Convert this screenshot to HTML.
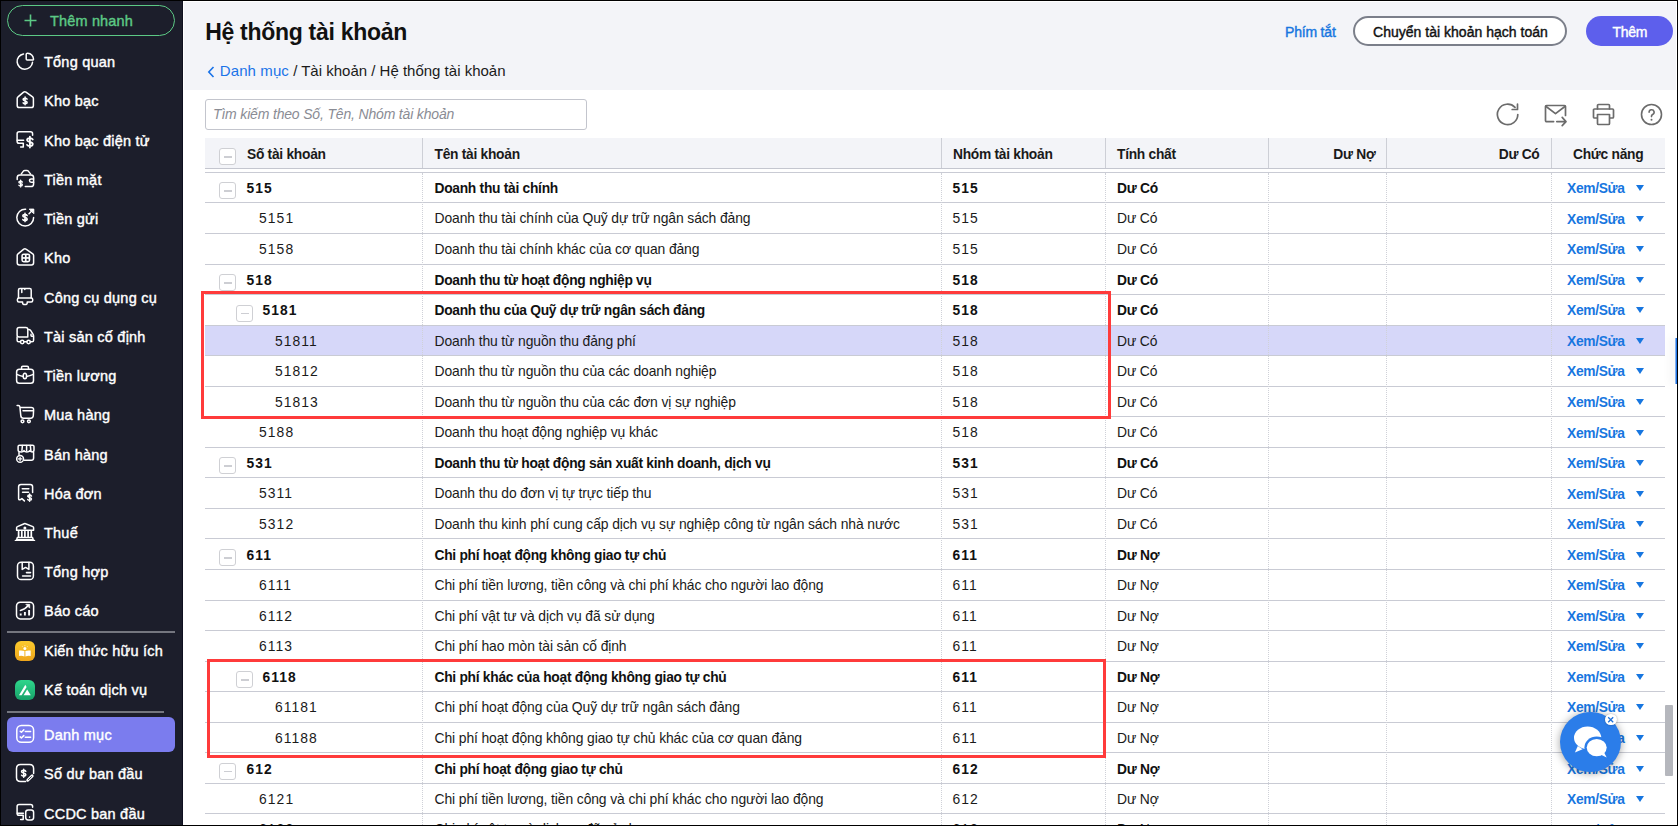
<!DOCTYPE html>
<html><head><meta charset="utf-8"><title>Hệ thống tài khoản</title>
<style>
*{box-sizing:border-box;margin:0;padding:0}
html,body{width:1678px;height:826px;overflow:hidden;background:#fff;font-family:"Liberation Sans", sans-serif;position:relative}
.a{position:absolute}
.nw{white-space:nowrap}
.si{position:absolute;left:44px;height:20px;line-height:20px;font-size:14.5px;letter-spacing:0.22px;-webkit-text-stroke:0.4px #fff;color:#fff;white-space:nowrap}
.ic{position:absolute;left:16px;width:18px;height:18px}
.ic svg{display:block;width:18px;height:18px;overflow:visible}
.row{position:absolute;left:205px;width:1460px;border-bottom:1px solid #c9cbd4}
.c{position:absolute;top:0;white-space:nowrap;color:#1a1a1a}
.b{font-weight:bold}
.cb{position:absolute;width:17px;height:17px;border:1px solid #cfd0d4;border-radius:3px;background:#fff}
.cb:after{content:"";position:absolute;left:3.5px;top:7px;width:8.5px;height:1.6px;background:#cdced3}
.xs{position:absolute;left:1567px;color:#1776e0;font-weight:bold;font-size:13.8px;letter-spacing:-0.32px;white-space:nowrap}
.tri{position:absolute;left:1636px;width:0;height:0;border-left:4px solid transparent;border-right:4px solid transparent;border-top:6px solid #1776e0}
.vd{position:absolute;width:0;border-left:1px dotted #cfd1d8}
</style></head>
<body>
<div class="a" style="left:0;top:0;width:183px;height:826px;background:#1c1e2b"></div>
<div class="a" style="left:182px;top:0;width:1px;height:826px;background:#0f1020"></div>
<div class="a" style="left:184px;top:2px;width:1492px;height:88px;background:#f3f4f8"></div>
<div class="a" style="left:7px;top:5px;width:168px;height:31px;border:1.5px solid #5cc985;border-radius:16px"></div>
<svg class="a" style="left:24px;top:14px" width="13" height="13" viewBox="0 0 13 13"><path d="M6.5 0.5V12.5M0.5 6.5H12.5" stroke="#5cc985" stroke-width="1.6" fill="none"/></svg>
<div class="a nw" style="left:50px;top:11px;height:20px;line-height:20px;font-size:14.5px;letter-spacing:0.16px;-webkit-text-stroke:0.4px #5cc985;color:#5cc985">Thêm nhanh</div>
<div class="a" style="left:7px;top:631px;width:168px;height:2px;background:#74767f"></div>
<div class="a" style="left:7px;top:711px;width:157px;height:2px;background:#74767f"></div>
<div class="a" style="left:7px;top:717px;width:168px;height:35px;background:#7b7cee;border-radius:6px"></div>
<div class="si" style="top:52.25px">Tổng quan</div>
<div class="a" style="left:12px;top:48px;width:28px;height:28px"><svg width="28" height="28" viewBox="0 0 28 28" fill="none" stroke="#fff" stroke-width="1.5" stroke-linecap="round" stroke-linejoin="round"><path d="M11.5 5.9A7.7 7.7 0 1 0 20.5 14.3"/><path d="M14.2 6.4V11Q14.2 12 15.2 12H20.6Q21.6 12 21.5 11A6.6 6.6 0 0 0 15.6 5.2Q14.2 5.1 14.2 6.4Z"/></svg></div>
<div class="si" style="top:91.48px">Kho bạc</div>
<div class="a" style="left:12px;top:87px;width:28px;height:28px"><svg width="28" height="28" viewBox="0 0 28 28" fill="none" stroke="#fff" stroke-width="1.5" stroke-linecap="round" stroke-linejoin="round"><path d="M5.2 11.4Q5.2 10.5 6 9.9L11.6 5.1Q12.8 4.2 14 5.1L20.6 9.9Q21.4 10.5 21.4 11.4V18.5Q21.4 20.6 19.3 20.6H7.3Q5.2 20.6 5.2 18.5Z"/><path d="M15.08 12.15C14.68 11.47 13.69 11.16 13.10 11.16C11.91 11.16 11.12 11.62 11.12 12.46C11.12 13.98 15.08 13.44 15.08 15.19C15.08 16.10 14.29 16.64 13.10 16.64C12.31 16.64 11.42 16.33 11.12 15.80M13.10 10.10V17.70" stroke-width="1.5"/></svg></div>
<div class="si" style="top:130.71px">Kho bạc điện tử</div>
<div class="a" style="left:12px;top:126px;width:28px;height:28px"><svg width="28" height="28" viewBox="0 0 28 28" fill="none" stroke="#fff" stroke-width="1.5" stroke-linecap="round" stroke-linejoin="round"><path d="M20.6 9.3V7.9Q20.6 5.8 18.5 5.8H7.2Q5.1 5.8 5.1 7.9V15.2Q5.1 17.3 7.2 17.3H11.3V21H8.6"/><path d="M5.3 14.2H11.6"/><path d="M20.76 13.57C20.19 12.58 18.76 12.14 17.90 12.14C16.18 12.14 15.04 12.80 15.04 14.01C15.04 16.21 20.76 15.44 20.76 17.97C20.76 19.29 19.62 20.06 17.90 20.06C16.76 20.06 15.47 19.62 15.04 18.85M17.90 10.60V21.60" stroke-width="1.8"/></svg></div>
<div class="si" style="top:169.94px">Tiền mặt</div>
<div class="a" style="left:12px;top:165px;width:28px;height:28px"><svg width="28" height="28" viewBox="0 0 28 28" fill="none" stroke="#fff" stroke-width="1.5" stroke-linecap="round" stroke-linejoin="round"><path d="M9.3 8.9L11.6 5.9Q12.1 5.4 12.8 5.4H15Q15.6 5.4 16.1 5.9L18.5 8.9"/><path d="M5.2 14.5V12.6Q5.2 9.9 7.9 9.9H19Q21.6 9.9 21.6 12.6V19Q21.6 21.6 19 21.6H13.3"/><path d="M21.6 13.9H19.2A1.7 1.7 0 1 0 19.2 17.3H21.6"/><path d="M10.32 17.08C9.97 16.49 9.11 16.22 8.60 16.22C7.57 16.22 6.88 16.62 6.88 17.35C6.88 18.67 10.32 18.20 10.32 19.72C10.32 20.51 9.63 20.98 8.60 20.98C7.91 20.98 7.14 20.71 6.88 20.25M8.60 15.30V21.90" stroke-width="1.4"/></svg></div>
<div class="si" style="top:209.17px">Tiền gửi</div>
<div class="a" style="left:12px;top:204px;width:28px;height:28px"><svg width="28" height="28" viewBox="0 0 28 28" fill="none" stroke="#fff" stroke-width="1.5" stroke-linecap="round" stroke-linejoin="round"><path d="M13.6 5.2A8.4 8.4 0 1 0 21.6 13.4"/><path d="M17 9.8L21 5.8"/><path d="M17.6 5.1H21.8V9.3Z" fill="#fff" stroke-width="1"/><path d="M15.13 11.61C14.71 10.88 13.64 10.55 13.00 10.55C11.72 10.55 10.87 11.04 10.87 11.94C10.87 13.58 15.13 13.01 15.13 14.89C15.13 15.88 14.28 16.45 13.00 16.45C12.15 16.45 11.19 16.12 10.87 15.55M13.00 9.40V17.60" stroke-width="1.6"/></svg></div>
<div class="si" style="top:248.40px">Kho</div>
<div class="a" style="left:12px;top:244px;width:28px;height:28px"><svg width="28" height="28" viewBox="0 0 28 28" fill="none" stroke="#fff" stroke-width="1.5" stroke-linecap="round" stroke-linejoin="round"><path d="M5.2 11.4Q5.2 10.5 6 9.9L11.8 5.1Q12.9 4.2 14 5.1L20.8 9.9Q21.6 10.5 21.6 11.4V18.8Q21.6 20.9 19.5 20.9H7.3Q5.2 20.9 5.2 18.8Z"/><rect x="9.3" y="9.6" width="9" height="8.8" rx="2.4" fill="#fff" stroke="none"/><rect x="10.9" y="11.1" width="2" height="2" fill="#1c1e2b" stroke="none"/><rect x="14.6" y="11.1" width="2" height="2" fill="#1c1e2b" stroke="none"/><rect x="10.9" y="14.8" width="2" height="2" fill="#1c1e2b" stroke="none"/><rect x="14.6" y="14.8" width="2" height="2" fill="#1c1e2b" stroke="none"/></svg></div>
<div class="si" style="top:287.63px">Công cụ dụng cụ</div>
<div class="a" style="left:12px;top:283px;width:28px;height:28px"><svg width="28" height="28" viewBox="0 0 28 28" fill="none" stroke="#fff" stroke-width="1.5" stroke-linecap="round" stroke-linejoin="round"><path d="M6.5 14.8V7Q6.5 5.6 7.9 5.6H17.8Q19.2 5.6 19.2 7V14.8"/><path d="M9.8 6V9.6M12.8 5.8V6.6"/><path d="M5.4 16.5Q5.4 15 6.9 15H19.2Q20.7 15 20.7 16.5V17.4Q20.7 18.9 19.2 18.9H15.2V20Q15.2 21.6 12.9 21.6Q10.6 21.6 10.6 20V18.9H6.9Q5.4 18.9 5.4 17.4Z"/></svg></div>
<div class="si" style="top:326.86px">Tài sản cố định</div>
<div class="a" style="left:12px;top:322px;width:28px;height:28px"><svg width="28" height="28" viewBox="0 0 28 28" fill="none" stroke="#fff" stroke-width="1.5" stroke-linecap="round" stroke-linejoin="round"><path d="M15.8 14.6V7.4Q15.8 5.4 13.8 5.4H7.1Q5.1 5.4 5.1 7.4V12.9Q5.1 14.9 7.1 14.9H15.8"/><path d="M16.6 7.4Q17.9 7.4 18.6 8.4L21.1 12.4Q21.6 13.2 21.6 14.2V18.2Q21.6 19.8 20 19.8H18.4"/><path d="M5.1 14.9V18.2Q5.1 19.8 6.7 19.8H8.4M12 19.8H14.8"/><circle cx="10.2" cy="20" r="1.7"/><circle cx="16.6" cy="20" r="1.7"/><path d="M19 12.2V13.6Q19 14.2 19.6 14.2H20.6"/></svg></div>
<div class="si" style="top:366.09px">Tiền lương</div>
<div class="a" style="left:12px;top:361px;width:28px;height:28px"><svg width="28" height="28" viewBox="0 0 28 28" fill="none" stroke="#fff" stroke-width="1.5" stroke-linecap="round" stroke-linejoin="round"><rect x="4.6" y="8.2" width="16.9" height="14" rx="2.8"/><path d="M9.5 8.2V6.7Q9.5 5.3 10.9 5.3H15.1Q16.5 5.3 16.5 6.7V8.2"/><path d="M4.8 13.4Q8 15 11.2 15.4M14.6 15.4Q18 15 21.3 13.4"/><ellipse cx="12.9" cy="15" rx="1.7" ry="2.8"/></svg></div>
<div class="si" style="top:405.32px">Mua hàng</div>
<div class="a" style="left:12px;top:401px;width:28px;height:28px"><svg width="28" height="28" viewBox="0 0 28 28" fill="none" stroke="#fff" stroke-width="1.5" stroke-linecap="round" stroke-linejoin="round"><path d="M5.1 4.6H6.4Q7.7 4.6 7.9 5.9L8.8 14.6Q9 17.2 11.5 17.2H18.7Q21.1 17.2 21.3 14.8L21.6 9Q21.7 6.4 19.2 6.4H8.1"/><path d="M11 9.8H21.1"/><circle cx="10.5" cy="20.3" r="1.4"/><circle cx="16.9" cy="20.3" r="1.4"/></svg></div>
<div class="si" style="top:444.55px">Bán hàng</div>
<div class="a" style="left:12px;top:440px;width:28px;height:28px"><svg width="28" height="28" viewBox="0 0 28 28" fill="none" stroke="#fff" stroke-width="1.5" stroke-linecap="round" stroke-linejoin="round"><path d="M6.1 10.2V6.6Q6.1 5.2 7.5 5.2H20.6Q22 5.2 22 6.6V10Q22 11.9 20.1 11.9Q18.2 11.9 17.7 10.6Q17 11.9 14.9 11.9Q12.7 11.9 12 10.6Q11.3 11.9 9.3 11.9Q6.1 11.9 6.1 10.2Z"/><path d="M10.4 5.4L9.9 10.8M14.6 5.4V10.8M18.3 5.4L18.9 10.8"/><path d="M7 12.6V14.6M21.6 12.4V18Q21.6 20.3 19.3 20.3H12.2"/><circle cx="8.1" cy="18.9" r="3.4" fill="#1c1e2b"/><path d="M8.1 17.2V20.6M6.4 18.9H9.8" stroke-width="1.3"/></svg></div>
<div class="si" style="top:483.78px">Hóa đơn</div>
<div class="a" style="left:12px;top:479px;width:28px;height:28px"><svg width="28" height="28" viewBox="0 0 28 28" fill="none" stroke="#fff" stroke-width="1.5" stroke-linecap="round" stroke-linejoin="round"><path d="M20.6 13.4V7.8Q20.6 5.5 18.3 5.5H9Q6.6 5.5 6.6 7.8V19.6Q6.6 21 8 20.8L9.9 19.6L12.4 21.9"/><path d="M10.3 9.8H16.8M10.6 13.2H16.5" stroke-width="1.6"/><path d="M19.47 17.04C19.10 16.40 18.16 16.11 17.60 16.11C16.48 16.11 15.73 16.54 15.73 17.33C15.73 18.77 19.47 18.27 19.47 19.92C19.47 20.79 18.72 21.29 17.60 21.29C16.85 21.29 16.01 21.00 15.73 20.50M17.60 15.10V22.30" stroke-width="1.5"/></svg></div>
<div class="si" style="top:523.01px">Thuế</div>
<div class="a" style="left:12px;top:519px;width:28px;height:28px"><svg width="28" height="28" viewBox="0 0 28 28" fill="none" stroke="#fff" stroke-width="1.5" stroke-linecap="round" stroke-linejoin="round"><path d="M4.6 11.3V8.7Q4.6 7.9 5.4 7.6L12.2 4.7Q12.9 4.4 13.6 4.7L20.9 7.6Q21.6 7.9 21.6 8.7V11.3Z"/><circle cx="12.9" cy="8.9" r="1.5" fill="#fff" stroke="none"/><path d="M6.6 12.6V17.8M9.8 12.6V17.8M12.9 12.6V17.8M16.1 12.6V17.8M19.3 12.6V17.8" stroke-width="1.7"/><path d="M5.3 18.6H20.6L21.2 20.7H4.7Z"/><path d="M3.3 21.4H22.6" stroke-width="1.3"/></svg></div>
<div class="si" style="top:562.24px">Tổng hợp</div>
<div class="a" style="left:12px;top:558px;width:28px;height:28px"><svg width="28" height="28" viewBox="0 0 28 28" fill="none" stroke="#fff" stroke-width="1.5" stroke-linecap="round" stroke-linejoin="round"><rect x="5.5" y="4.3" width="15.9" height="17.3" rx="3.6"/><path d="M10.2 4.4V11.4L13.6 9.4L16.9 11.4V4.4"/><path d="M14.5 14.6H18.5M10.6 18H18.5" stroke-width="1.6"/></svg></div>
<div class="si" style="top:601.47px">Báo cáo</div>
<div class="a" style="left:12px;top:597px;width:28px;height:28px"><svg width="28" height="28" viewBox="0 0 28 28" fill="none" stroke="#fff" stroke-width="1.5" stroke-linecap="round" stroke-linejoin="round"><rect x="4.5" y="5.2" width="17.1" height="16.7" rx="3.8"/><path d="M8.7 16.4V18.6M12.9 15V18.6M17.1 13V18.6" stroke-width="1.9" stroke-linecap="butt"/><path d="M8.4 13.5Q12.6 12.8 16.3 8.6"/><path d="M14.2 7.3H17.7V10.8Z" fill="#fff" stroke-width="0.8"/></svg></div>
<div class="si" style="top:640.70px">Kiến thức hữu ích</div>
<div class="a" style="left:15px;top:641px;width:20px;height:20px;border-radius:6px;background:linear-gradient(#fccb2e,#eea51b)"><svg width="20" height="20" viewBox="0 0 20 20"><path d="M4.1 9.6Q6.8 9 9.4 10.1V15.4Q6.8 14.4 4.1 15Z" fill="#fff"/><path d="M15.7 9.6Q13 9 10.4 10.1V15.4Q13 14.4 15.7 15Z" fill="#fff"/><circle cx="9.9" cy="7.6" r="1.5" fill="#fff"/><path d="M9.9 4.3V5.2M7.3 5.4L7.9 6M12.5 5.4L11.9 6" stroke="#fff" stroke-width="0.7"/></svg></div>
<div class="si" style="top:679.93px">Kế toán dịch vụ</div>
<div class="a" style="left:15px;top:680px;width:20px;height:20px;border-radius:6px;background:linear-gradient(#2fd68c,#17a169)"><svg width="20" height="20" viewBox="0 0 20 20"><path d="M4 15.2L10.3 4.7L11.6 6.9L6.6 15.2Z" fill="#fff"/><path d="M8.6 15.2L12.2 9.4L15.8 15.2Z" fill="#fff"/></svg></div>
<div class="si" style="top:725.16px">Danh mục</div>
<div class="a" style="left:12px;top:720px;width:28px;height:28px"><svg width="28" height="28" viewBox="0 0 28 28" fill="none" stroke="#fff" stroke-width="1.5" stroke-linecap="round" stroke-linejoin="round"><rect x="4.8" y="5.5" width="16.8" height="16.8" rx="4.6"/><path d="M8.2 11.2L9.4 12.3L11.8 9.9M8.2 16.9L9.4 18L11.8 15.6M13.3 11.5H18.6M13.3 17.3H18.6"/></svg></div>
<div class="si" style="top:764.39px">Số dư ban đầu</div>
<div class="a" style="left:12px;top:760px;width:28px;height:28px"><svg width="28" height="28" viewBox="0 0 28 28" fill="none" stroke="#fff" stroke-width="1.5" stroke-linecap="round" stroke-linejoin="round"><path d="M21.6 13.4V8.6Q21.6 4.5 17.5 4.5H8.5Q4.5 4.5 4.5 8.6V17.6Q4.5 21.6 8.5 21.6H13.6"/><path d="M15.7 20.3L20.2 15.9" stroke-width="2.9"/><path d="M16.4 19.6L19.5 16.6" stroke="#1c1e2b" stroke-width="0.9"/><path d="M13.81 11.34C13.38 10.61 12.33 10.28 11.70 10.28C10.44 10.28 9.59 10.77 9.59 11.66C9.59 13.28 13.81 12.71 13.81 14.58C13.81 15.55 12.96 16.12 11.70 16.12C10.86 16.12 9.91 15.79 9.59 15.22M11.70 9.15V17.25" stroke-width="1.5"/></svg></div>
<div class="si" style="top:803.62px">CCDC ban đầu</div>
<div class="a" style="left:12px;top:798px;width:28px;height:28px"><svg width="28" height="28" viewBox="0 0 28 28" fill="none" stroke="#fff" stroke-width="1.5" stroke-linecap="round" stroke-linejoin="round"><path d="M20.6 9.3V8.4Q20.6 6.4 18.6 6.4H7.1Q5.1 6.4 5.1 8.4V15.2Q5.1 17.3 7.1 17.3H11.2V21.6H8.6"/><path d="M5.3 15.3H11.4"/><rect x="13.7" y="11.9" width="7.9" height="10" rx="2.4"/><path d="M17.6 19V19.1" stroke-width="1.6"/></svg></div>
<div class="a nw" style="left:205.2px;top:17.8px;height:28px;line-height:28px;font-size:23px;letter-spacing:-0.29px;font-weight:bold;color:#111">Hệ thống tài khoản</div>
<svg class="a" style="left:207px;top:66px" width="8" height="12" viewBox="0 0 8 12"><path d="M6.5 1L1.8 6L6.5 11" stroke="#1a73e8" stroke-width="1.6" fill="none"/></svg>
<div class="a nw" style="left:219.8px;top:61.3px;height:20px;line-height:20px;font-size:15px;color:#1a1a1a"><span style="color:#1a73e8;letter-spacing:0.1px">Danh mục</span> / Tài khoản / Hệ thống tài khoản</div>
<div class="a nw" style="left:1285px;top:22px;height:20px;line-height:20px;font-size:14px;letter-spacing:-0.19px;-webkit-text-stroke:0.4px #1776e0;color:#1776e0">Phím tắt</div>
<div class="a" style="left:1353px;top:16px;width:214px;height:30px;border:2px solid #7b7f8a;border-radius:15px;background:#fff"></div>
<div class="a nw" style="left:1373px;top:22px;height:20px;line-height:20px;font-size:14px;letter-spacing:0.02px;-webkit-text-stroke:0.4px #111;color:#111">Chuyển tài khoản hạch toán</div>
<div class="a" style="left:1586px;top:16px;width:87px;height:30px;border-radius:15px;background:#5d5fec"></div>
<div class="a nw" style="left:1612.5px;top:22px;height:20px;line-height:20px;font-size:14px;letter-spacing:-0.3px;-webkit-text-stroke:0.4px #fff;color:#fff">Thêm</div>
<div class="a" style="left:205px;top:99px;width:382px;height:31px;border:1px solid #c3c5cd;border-radius:3px;background:#fff"></div>
<div class="a nw" style="left:213px;top:104px;height:20px;line-height:20px;font-size:14px;letter-spacing:-0.17px;font-style:italic;color:#8a8c94">Tìm kiếm theo Số, Tên, Nhóm tài khoản</div>
<svg class="a" style="left:1496px;top:103px" width="23" height="23" viewBox="0 0 23 23" fill="none" stroke="#6b6b6b" stroke-width="1.7" stroke-linecap="round" stroke-linejoin="round"><path d="M21.8 11.5A10.2 10.2 0 1 1 19 4.4"/><path d="M21.5 1.2V6.5H16.2"/></svg>
<svg class="a" style="left:1544px;top:104px" width="24" height="23" viewBox="0 0 24 23" fill="none" stroke="#6b6b6b" stroke-width="1.7" stroke-linecap="round" stroke-linejoin="round"><path d="M9.6 17.6H2.6A1.1 1.1 0 0 1 1.5 16.5V2.6A1.1 1.1 0 0 1 2.6 1.5H20.4A1.1 1.1 0 0 1 21.5 2.6V11.5"/><path d="M1.8 2.2L11.5 9.6L21.2 2.2"/><path d="M12.8 17.6H21.8M18.2 13.4L22 17.6L18.2 21.6"/></svg>
<svg class="a" style="left:1592px;top:103px" width="24" height="23" viewBox="0 0 24 23" fill="none" stroke="#6b6b6b" stroke-width="1.7" stroke-linecap="round" stroke-linejoin="round"><path d="M5.5 6V2.5A1 1 0 0 1 6.5 1.5H16.5A1 1 0 0 1 17.5 2.5V6"/><path d="M5 15H2.5A1 1 0 0 1 1.5 14V7A1 1 0 0 1 2.5 6H20.5A1 1 0 0 1 21.5 7V14A1 1 0 0 1 20.5 15H18"/><path d="M5.5 11.5H17.5V20.5A1 1 0 0 1 16.5 21.5H6.5A1 1 0 0 1 5.5 20.5Z"/></svg>
<svg class="a" style="left:1640px;top:103px" width="23" height="23" viewBox="0 0 23 23" fill="none" stroke="#6b6b6b" stroke-width="1.6" stroke-linecap="round" stroke-linejoin="round"><circle cx="11.5" cy="11.5" r="10"/><path d="M9.1 9.2A2.5 2.5 0 1 1 12.6 11.5C11.9 11.9 11.5 12.4 11.5 13.1V13.6"/><circle cx="11.5" cy="16.7" r="1" fill="#6b6b6b" stroke="none"/></svg>
<div class="a" style="left:205px;top:138px;width:1460px;height:31px;background:#f3f4f8;border-bottom:1px solid #c4c6cf"></div>
<div class="a" style="left:422px;top:138px;width:1px;height:30px;background:#cdcfd6"></div>
<div class="a" style="left:941px;top:138px;width:1px;height:30px;background:#cdcfd6"></div>
<div class="a" style="left:1105px;top:138px;width:1px;height:30px;background:#cdcfd6"></div>
<div class="a" style="left:1268px;top:138px;width:1px;height:30px;background:#cdcfd6"></div>
<div class="a" style="left:1386px;top:138px;width:1px;height:30px;background:#cdcfd6"></div>
<div class="a" style="left:1551px;top:138px;width:1px;height:30px;background:#cdcfd6"></div>
<div class="cb" style="left:219px;top:148px"></div>
<div class="a nw" style="left:247px;top:145px;font-size:13.8px;letter-spacing:-0.28px;font-weight:bold;color:#1a1a1a;height:20px;line-height:20px">Số tài khoản</div>
<div class="a nw" style="left:434.5px;top:145px;font-size:13.8px;letter-spacing:-0.28px;font-weight:bold;color:#1a1a1a;height:20px;line-height:20px">Tên tài khoản</div>
<div class="a nw" style="left:953px;top:145px;font-size:13.8px;letter-spacing:-0.28px;font-weight:bold;color:#1a1a1a;height:20px;line-height:20px">Nhóm tài khoản</div>
<div class="a nw" style="left:1117px;top:145px;font-size:13.8px;letter-spacing:-0.28px;font-weight:bold;color:#1a1a1a;height:20px;line-height:20px">Tính chất</div>
<div class="a nw" style="left:1268px;width:107.5px;text-align:right;top:145px;font-size:13.8px;letter-spacing:-0.28px;font-weight:bold;color:#1a1a1a;height:20px;line-height:20px">Dư Nợ</div>
<div class="a nw" style="left:1386px;width:153.5px;text-align:right;top:145px;font-size:13.8px;letter-spacing:-0.28px;font-weight:bold;color:#1a1a1a;height:20px;line-height:20px">Dư Có</div>
<div class="a nw" style="left:1573px;top:145px;font-size:13.8px;letter-spacing:-0.28px;font-weight:bold;color:#1a1a1a;height:20px;line-height:20px">Chức năng</div>
<div class="a" style="left:205px;top:172px;width:1460px;height:1px;background:#c9cbd4"></div>
<div class="a" style="left:205px;top:202px;width:1460px;height:1px;background:#c9cbd4"></div>
<div class="cb" style="left:219px;top:182.37px"></div>
<div class="a nw" style="left:246.4px;top:179.17px;font-size:13.8px;letter-spacing:-0.28px;font-weight:bold;color:#111;height:20px;line-height:20px;letter-spacing:1.08px;">515</div>
<div class="a nw" style="left:434.5px;top:179.17px;font-size:13.8px;letter-spacing:-0.28px;font-weight:bold;color:#111;height:20px;line-height:20px">Doanh thu tài chính</div>
<div class="a nw" style="left:952.5px;top:179.17px;font-size:13.8px;letter-spacing:-0.28px;font-weight:bold;color:#111;height:20px;line-height:20px;letter-spacing:1.08px;">515</div>
<div class="a nw" style="left:1117px;top:179.17px;font-size:13.8px;letter-spacing:-0.28px;font-weight:bold;color:#111;height:20px;line-height:20px">Dư Có</div>
<div class="xs" style="top:179.17px;height:20px;line-height:20px">Xem/Sửa</div>
<div class="tri" style="top:185.17px"></div>
<div class="a" style="left:205px;top:233px;width:1460px;height:1px;background:#c9cbd4"></div>
<div class="a nw" style="left:259.1px;top:208.42px;font-size:13.9px;letter-spacing:-0.11px;color:#1a1a1a;height:20px;line-height:20px;letter-spacing:1.04px;">5151</div>
<div class="a nw" style="left:434.5px;top:208.42px;font-size:13.9px;letter-spacing:-0.11px;color:#1a1a1a;height:20px;line-height:20px">Doanh thu tài chính của Quỹ dự trữ ngân sách đảng</div>
<div class="a nw" style="left:952.5px;top:208.42px;font-size:13.9px;letter-spacing:-0.11px;color:#1a1a1a;height:20px;line-height:20px;letter-spacing:1.04px;">515</div>
<div class="a nw" style="left:1117px;top:208.42px;font-size:13.9px;letter-spacing:-0.11px;color:#1a1a1a;height:20px;line-height:20px">Dư Có</div>
<div class="xs" style="top:209.72px;height:20px;line-height:20px">Xem/Sửa</div>
<div class="tri" style="top:215.72px"></div>
<div class="a" style="left:205px;top:264px;width:1460px;height:1px;background:#c9cbd4"></div>
<div class="a nw" style="left:259.1px;top:238.97px;font-size:13.9px;letter-spacing:-0.11px;color:#1a1a1a;height:20px;line-height:20px;letter-spacing:1.04px;">5158</div>
<div class="a nw" style="left:434.5px;top:238.97px;font-size:13.9px;letter-spacing:-0.11px;color:#1a1a1a;height:20px;line-height:20px">Doanh thu tài chính khác của cơ quan đảng</div>
<div class="a nw" style="left:952.5px;top:238.97px;font-size:13.9px;letter-spacing:-0.11px;color:#1a1a1a;height:20px;line-height:20px;letter-spacing:1.04px;">515</div>
<div class="a nw" style="left:1117px;top:238.97px;font-size:13.9px;letter-spacing:-0.11px;color:#1a1a1a;height:20px;line-height:20px">Dư Có</div>
<div class="xs" style="top:240.27px;height:20px;line-height:20px">Xem/Sửa</div>
<div class="tri" style="top:246.27px"></div>
<div class="a" style="left:205px;top:294px;width:1460px;height:1px;background:#c9cbd4"></div>
<div class="cb" style="left:219px;top:274.02px"></div>
<div class="a nw" style="left:246.4px;top:270.82px;font-size:13.8px;letter-spacing:-0.28px;font-weight:bold;color:#111;height:20px;line-height:20px;letter-spacing:1.08px;">518</div>
<div class="a nw" style="left:434.5px;top:270.82px;font-size:13.8px;letter-spacing:-0.28px;font-weight:bold;color:#111;height:20px;line-height:20px">Doanh thu từ hoạt động nghiệp vụ</div>
<div class="a nw" style="left:952.5px;top:270.82px;font-size:13.8px;letter-spacing:-0.28px;font-weight:bold;color:#111;height:20px;line-height:20px;letter-spacing:1.08px;">518</div>
<div class="a nw" style="left:1117px;top:270.82px;font-size:13.8px;letter-spacing:-0.28px;font-weight:bold;color:#111;height:20px;line-height:20px">Dư Có</div>
<div class="xs" style="top:270.82px;height:20px;line-height:20px">Xem/Sửa</div>
<div class="tri" style="top:276.82px"></div>
<div class="a" style="left:205px;top:325px;width:1460px;height:1px;background:#c9cbd4"></div>
<div class="cb" style="left:236px;top:304.57px"></div>
<div class="a nw" style="left:262.6px;top:301.37px;font-size:13.8px;letter-spacing:-0.28px;font-weight:bold;color:#111;height:20px;line-height:20px;letter-spacing:1.08px;">5181</div>
<div class="a nw" style="left:434.5px;top:301.37px;font-size:13.8px;letter-spacing:-0.28px;font-weight:bold;color:#111;height:20px;line-height:20px">Doanh thu của Quỹ dự trữ ngân sách đảng</div>
<div class="a nw" style="left:952.5px;top:301.37px;font-size:13.8px;letter-spacing:-0.28px;font-weight:bold;color:#111;height:20px;line-height:20px;letter-spacing:1.08px;">518</div>
<div class="a nw" style="left:1117px;top:301.37px;font-size:13.8px;letter-spacing:-0.28px;font-weight:bold;color:#111;height:20px;line-height:20px">Dư Có</div>
<div class="xs" style="top:301.37px;height:20px;line-height:20px">Xem/Sửa</div>
<div class="tri" style="top:307.37px"></div>
<div class="a" style="left:205px;top:326px;width:1460px;height:29px;background:#d6d7f9"></div>
<div class="a" style="left:205px;top:355px;width:1460px;height:1px;background:#c9cbd4"></div>
<div class="a nw" style="left:275.0px;top:330.61px;font-size:13.9px;letter-spacing:-0.11px;color:#1a1a1a;height:20px;line-height:20px;letter-spacing:1.04px;">51811</div>
<div class="a nw" style="left:434.5px;top:330.61px;font-size:13.9px;letter-spacing:-0.11px;color:#1a1a1a;height:20px;line-height:20px">Doanh thu từ nguồn thu đảng phí</div>
<div class="a nw" style="left:952.5px;top:330.61px;font-size:13.9px;letter-spacing:-0.11px;color:#1a1a1a;height:20px;line-height:20px;letter-spacing:1.04px;">518</div>
<div class="a nw" style="left:1117px;top:330.61px;font-size:13.9px;letter-spacing:-0.11px;color:#1a1a1a;height:20px;line-height:20px">Dư Có</div>
<div class="xs" style="top:331.91px;height:20px;line-height:20px">Xem/Sửa</div>
<div class="tri" style="top:337.91px"></div>
<div class="a" style="left:205px;top:386px;width:1460px;height:1px;background:#c9cbd4"></div>
<div class="a nw" style="left:275.0px;top:361.16px;font-size:13.9px;letter-spacing:-0.11px;color:#1a1a1a;height:20px;line-height:20px;letter-spacing:1.04px;">51812</div>
<div class="a nw" style="left:434.5px;top:361.16px;font-size:13.9px;letter-spacing:-0.11px;color:#1a1a1a;height:20px;line-height:20px">Doanh thu từ nguồn thu của các doanh nghiệp</div>
<div class="a nw" style="left:952.5px;top:361.16px;font-size:13.9px;letter-spacing:-0.11px;color:#1a1a1a;height:20px;line-height:20px;letter-spacing:1.04px;">518</div>
<div class="a nw" style="left:1117px;top:361.16px;font-size:13.9px;letter-spacing:-0.11px;color:#1a1a1a;height:20px;line-height:20px">Dư Có</div>
<div class="xs" style="top:362.46px;height:20px;line-height:20px">Xem/Sửa</div>
<div class="tri" style="top:368.46px"></div>
<div class="a" style="left:205px;top:416px;width:1460px;height:1px;background:#c9cbd4"></div>
<div class="a nw" style="left:275.0px;top:391.71px;font-size:13.9px;letter-spacing:-0.11px;color:#1a1a1a;height:20px;line-height:20px;letter-spacing:1.04px;">51813</div>
<div class="a nw" style="left:434.5px;top:391.71px;font-size:13.9px;letter-spacing:-0.11px;color:#1a1a1a;height:20px;line-height:20px">Doanh thu từ nguồn thu của các đơn vị sự nghiệp</div>
<div class="a nw" style="left:952.5px;top:391.71px;font-size:13.9px;letter-spacing:-0.11px;color:#1a1a1a;height:20px;line-height:20px;letter-spacing:1.04px;">518</div>
<div class="a nw" style="left:1117px;top:391.71px;font-size:13.9px;letter-spacing:-0.11px;color:#1a1a1a;height:20px;line-height:20px">Dư Có</div>
<div class="xs" style="top:393.01px;height:20px;line-height:20px">Xem/Sửa</div>
<div class="tri" style="top:399.01px"></div>
<div class="a" style="left:205px;top:447px;width:1460px;height:1px;background:#c9cbd4"></div>
<div class="a nw" style="left:259.1px;top:422.26px;font-size:13.9px;letter-spacing:-0.11px;color:#1a1a1a;height:20px;line-height:20px;letter-spacing:1.04px;">5188</div>
<div class="a nw" style="left:434.5px;top:422.26px;font-size:13.9px;letter-spacing:-0.11px;color:#1a1a1a;height:20px;line-height:20px">Doanh thu hoạt động nghiệp vụ khác</div>
<div class="a nw" style="left:952.5px;top:422.26px;font-size:13.9px;letter-spacing:-0.11px;color:#1a1a1a;height:20px;line-height:20px;letter-spacing:1.04px;">518</div>
<div class="a nw" style="left:1117px;top:422.26px;font-size:13.9px;letter-spacing:-0.11px;color:#1a1a1a;height:20px;line-height:20px">Dư Có</div>
<div class="xs" style="top:423.56px;height:20px;line-height:20px">Xem/Sửa</div>
<div class="tri" style="top:429.56px"></div>
<div class="a" style="left:205px;top:477px;width:1460px;height:1px;background:#c9cbd4"></div>
<div class="cb" style="left:219px;top:457.31px"></div>
<div class="a nw" style="left:246.4px;top:454.11px;font-size:13.8px;letter-spacing:-0.28px;font-weight:bold;color:#111;height:20px;line-height:20px;letter-spacing:1.08px;">531</div>
<div class="a nw" style="left:434.5px;top:454.11px;font-size:13.8px;letter-spacing:-0.28px;font-weight:bold;color:#111;height:20px;line-height:20px">Doanh thu từ hoạt động sản xuất kinh doanh, dịch vụ</div>
<div class="a nw" style="left:952.5px;top:454.11px;font-size:13.8px;letter-spacing:-0.28px;font-weight:bold;color:#111;height:20px;line-height:20px;letter-spacing:1.08px;">531</div>
<div class="a nw" style="left:1117px;top:454.11px;font-size:13.8px;letter-spacing:-0.28px;font-weight:bold;color:#111;height:20px;line-height:20px">Dư Có</div>
<div class="xs" style="top:454.11px;height:20px;line-height:20px">Xem/Sửa</div>
<div class="tri" style="top:460.11px"></div>
<div class="a" style="left:205px;top:508px;width:1460px;height:1px;background:#c9cbd4"></div>
<div class="a nw" style="left:259.1px;top:483.35px;font-size:13.9px;letter-spacing:-0.11px;color:#1a1a1a;height:20px;line-height:20px;letter-spacing:1.04px;">5311</div>
<div class="a nw" style="left:434.5px;top:483.35px;font-size:13.9px;letter-spacing:-0.11px;color:#1a1a1a;height:20px;line-height:20px">Doanh thu do đơn vị tự trực tiếp thu</div>
<div class="a nw" style="left:952.5px;top:483.35px;font-size:13.9px;letter-spacing:-0.11px;color:#1a1a1a;height:20px;line-height:20px;letter-spacing:1.04px;">531</div>
<div class="a nw" style="left:1117px;top:483.35px;font-size:13.9px;letter-spacing:-0.11px;color:#1a1a1a;height:20px;line-height:20px">Dư Có</div>
<div class="xs" style="top:484.65px;height:20px;line-height:20px">Xem/Sửa</div>
<div class="tri" style="top:490.65px"></div>
<div class="a" style="left:205px;top:538px;width:1460px;height:1px;background:#c9cbd4"></div>
<div class="a nw" style="left:259.1px;top:513.90px;font-size:13.9px;letter-spacing:-0.11px;color:#1a1a1a;height:20px;line-height:20px;letter-spacing:1.04px;">5312</div>
<div class="a nw" style="left:434.5px;top:513.90px;font-size:13.9px;letter-spacing:-0.11px;color:#1a1a1a;height:20px;line-height:20px">Doanh thu kinh phí cung cấp dịch vụ sự nghiệp công từ ngân sách nhà nước</div>
<div class="a nw" style="left:952.5px;top:513.90px;font-size:13.9px;letter-spacing:-0.11px;color:#1a1a1a;height:20px;line-height:20px;letter-spacing:1.04px;">531</div>
<div class="a nw" style="left:1117px;top:513.90px;font-size:13.9px;letter-spacing:-0.11px;color:#1a1a1a;height:20px;line-height:20px">Dư Có</div>
<div class="xs" style="top:515.20px;height:20px;line-height:20px">Xem/Sửa</div>
<div class="tri" style="top:521.20px"></div>
<div class="a" style="left:205px;top:569px;width:1460px;height:1px;background:#c9cbd4"></div>
<div class="cb" style="left:219px;top:548.95px"></div>
<div class="a nw" style="left:246.4px;top:545.75px;font-size:13.8px;letter-spacing:-0.28px;font-weight:bold;color:#111;height:20px;line-height:20px;letter-spacing:1.08px;">611</div>
<div class="a nw" style="left:434.5px;top:545.75px;font-size:13.8px;letter-spacing:-0.28px;font-weight:bold;color:#111;height:20px;line-height:20px">Chi phí hoạt động không giao tự chủ</div>
<div class="a nw" style="left:952.5px;top:545.75px;font-size:13.8px;letter-spacing:-0.28px;font-weight:bold;color:#111;height:20px;line-height:20px;letter-spacing:1.08px;">611</div>
<div class="a nw" style="left:1117px;top:545.75px;font-size:13.8px;letter-spacing:-0.28px;font-weight:bold;color:#111;height:20px;line-height:20px">Dư Nợ</div>
<div class="xs" style="top:545.75px;height:20px;line-height:20px">Xem/Sửa</div>
<div class="tri" style="top:551.75px"></div>
<div class="a" style="left:205px;top:600px;width:1460px;height:1px;background:#c9cbd4"></div>
<div class="a nw" style="left:259.1px;top:575.00px;font-size:13.9px;letter-spacing:-0.11px;color:#1a1a1a;height:20px;line-height:20px;letter-spacing:1.04px;">6111</div>
<div class="a nw" style="left:434.5px;top:575.00px;font-size:13.9px;letter-spacing:-0.11px;color:#1a1a1a;height:20px;line-height:20px">Chi phí tiền lương, tiền công và chi phí khác cho người lao động</div>
<div class="a nw" style="left:952.5px;top:575.00px;font-size:13.9px;letter-spacing:-0.11px;color:#1a1a1a;height:20px;line-height:20px;letter-spacing:1.04px;">611</div>
<div class="a nw" style="left:1117px;top:575.00px;font-size:13.9px;letter-spacing:-0.11px;color:#1a1a1a;height:20px;line-height:20px">Dư Nợ</div>
<div class="xs" style="top:576.30px;height:20px;line-height:20px">Xem/Sửa</div>
<div class="tri" style="top:582.30px"></div>
<div class="a" style="left:205px;top:630px;width:1460px;height:1px;background:#c9cbd4"></div>
<div class="a nw" style="left:259.1px;top:605.55px;font-size:13.9px;letter-spacing:-0.11px;color:#1a1a1a;height:20px;line-height:20px;letter-spacing:1.04px;">6112</div>
<div class="a nw" style="left:434.5px;top:605.55px;font-size:13.9px;letter-spacing:-0.11px;color:#1a1a1a;height:20px;line-height:20px">Chi phí vật tư và dịch vụ đã sử dụng</div>
<div class="a nw" style="left:952.5px;top:605.55px;font-size:13.9px;letter-spacing:-0.11px;color:#1a1a1a;height:20px;line-height:20px;letter-spacing:1.04px;">611</div>
<div class="a nw" style="left:1117px;top:605.55px;font-size:13.9px;letter-spacing:-0.11px;color:#1a1a1a;height:20px;line-height:20px">Dư Nợ</div>
<div class="xs" style="top:606.85px;height:20px;line-height:20px">Xem/Sửa</div>
<div class="tri" style="top:612.85px"></div>
<div class="a" style="left:205px;top:661px;width:1460px;height:1px;background:#c9cbd4"></div>
<div class="a nw" style="left:259.1px;top:636.09px;font-size:13.9px;letter-spacing:-0.11px;color:#1a1a1a;height:20px;line-height:20px;letter-spacing:1.04px;">6113</div>
<div class="a nw" style="left:434.5px;top:636.09px;font-size:13.9px;letter-spacing:-0.11px;color:#1a1a1a;height:20px;line-height:20px">Chi phí hao mòn tài sản cố định</div>
<div class="a nw" style="left:952.5px;top:636.09px;font-size:13.9px;letter-spacing:-0.11px;color:#1a1a1a;height:20px;line-height:20px;letter-spacing:1.04px;">611</div>
<div class="a nw" style="left:1117px;top:636.09px;font-size:13.9px;letter-spacing:-0.11px;color:#1a1a1a;height:20px;line-height:20px">Dư Nợ</div>
<div class="xs" style="top:637.39px;height:20px;line-height:20px">Xem/Sửa</div>
<div class="tri" style="top:643.39px"></div>
<div class="a" style="left:205px;top:691px;width:1460px;height:1px;background:#c9cbd4"></div>
<div class="cb" style="left:236px;top:671.14px"></div>
<div class="a nw" style="left:262.6px;top:667.94px;font-size:13.8px;letter-spacing:-0.28px;font-weight:bold;color:#111;height:20px;line-height:20px;letter-spacing:1.08px;">6118</div>
<div class="a nw" style="left:434.5px;top:667.94px;font-size:13.8px;letter-spacing:-0.28px;font-weight:bold;color:#111;height:20px;line-height:20px">Chi phí khác của hoạt động không giao tự chủ</div>
<div class="a nw" style="left:952.5px;top:667.94px;font-size:13.8px;letter-spacing:-0.28px;font-weight:bold;color:#111;height:20px;line-height:20px;letter-spacing:1.08px;">611</div>
<div class="a nw" style="left:1117px;top:667.94px;font-size:13.8px;letter-spacing:-0.28px;font-weight:bold;color:#111;height:20px;line-height:20px">Dư Nợ</div>
<div class="xs" style="top:667.94px;height:20px;line-height:20px">Xem/Sửa</div>
<div class="tri" style="top:673.94px"></div>
<div class="a" style="left:205px;top:722px;width:1460px;height:1px;background:#c9cbd4"></div>
<div class="a nw" style="left:275.0px;top:697.19px;font-size:13.9px;letter-spacing:-0.11px;color:#1a1a1a;height:20px;line-height:20px;letter-spacing:1.04px;">61181</div>
<div class="a nw" style="left:434.5px;top:697.19px;font-size:13.9px;letter-spacing:-0.11px;color:#1a1a1a;height:20px;line-height:20px">Chi phí hoạt động của Quỹ dự trữ ngân sách đảng</div>
<div class="a nw" style="left:952.5px;top:697.19px;font-size:13.9px;letter-spacing:-0.11px;color:#1a1a1a;height:20px;line-height:20px;letter-spacing:1.04px;">611</div>
<div class="a nw" style="left:1117px;top:697.19px;font-size:13.9px;letter-spacing:-0.11px;color:#1a1a1a;height:20px;line-height:20px">Dư Nợ</div>
<div class="xs" style="top:698.49px;height:20px;line-height:20px">Xem/Sửa</div>
<div class="tri" style="top:704.49px"></div>
<div class="a" style="left:205px;top:752px;width:1460px;height:1px;background:#c9cbd4"></div>
<div class="a nw" style="left:275.0px;top:727.74px;font-size:13.9px;letter-spacing:-0.11px;color:#1a1a1a;height:20px;line-height:20px;letter-spacing:1.04px;">61188</div>
<div class="a nw" style="left:434.5px;top:727.74px;font-size:13.9px;letter-spacing:-0.11px;color:#1a1a1a;height:20px;line-height:20px">Chi phí hoạt động không giao tự chủ khác của cơ quan đảng</div>
<div class="a nw" style="left:952.5px;top:727.74px;font-size:13.9px;letter-spacing:-0.11px;color:#1a1a1a;height:20px;line-height:20px;letter-spacing:1.04px;">611</div>
<div class="a nw" style="left:1117px;top:727.74px;font-size:13.9px;letter-spacing:-0.11px;color:#1a1a1a;height:20px;line-height:20px">Dư Nợ</div>
<div class="xs" style="top:729.04px;height:20px;line-height:20px">Xem/Sửa</div>
<div class="tri" style="top:735.04px"></div>
<div class="a" style="left:205px;top:783px;width:1460px;height:1px;background:#c9cbd4"></div>
<div class="cb" style="left:219px;top:762.79px"></div>
<div class="a nw" style="left:246.4px;top:759.59px;font-size:13.8px;letter-spacing:-0.28px;font-weight:bold;color:#111;height:20px;line-height:20px;letter-spacing:1.08px;">612</div>
<div class="a nw" style="left:434.5px;top:759.59px;font-size:13.8px;letter-spacing:-0.28px;font-weight:bold;color:#111;height:20px;line-height:20px">Chi phí hoạt động giao tự chủ</div>
<div class="a nw" style="left:952.5px;top:759.59px;font-size:13.8px;letter-spacing:-0.28px;font-weight:bold;color:#111;height:20px;line-height:20px;letter-spacing:1.08px;">612</div>
<div class="a nw" style="left:1117px;top:759.59px;font-size:13.8px;letter-spacing:-0.28px;font-weight:bold;color:#111;height:20px;line-height:20px">Dư Nợ</div>
<div class="xs" style="top:759.59px;height:20px;line-height:20px">Xem/Sửa</div>
<div class="tri" style="top:765.59px"></div>
<div class="a" style="left:205px;top:813px;width:1460px;height:1px;background:#c9cbd4"></div>
<div class="a nw" style="left:259.1px;top:788.83px;font-size:13.9px;letter-spacing:-0.11px;color:#1a1a1a;height:20px;line-height:20px;letter-spacing:1.04px;">6121</div>
<div class="a nw" style="left:434.5px;top:788.83px;font-size:13.9px;letter-spacing:-0.11px;color:#1a1a1a;height:20px;line-height:20px">Chi phí tiền lương, tiền công và chi phí khác cho người lao động</div>
<div class="a nw" style="left:952.5px;top:788.83px;font-size:13.9px;letter-spacing:-0.11px;color:#1a1a1a;height:20px;line-height:20px;letter-spacing:1.04px;">612</div>
<div class="a nw" style="left:1117px;top:788.83px;font-size:13.9px;letter-spacing:-0.11px;color:#1a1a1a;height:20px;line-height:20px">Dư Nợ</div>
<div class="xs" style="top:790.13px;height:20px;line-height:20px">Xem/Sửa</div>
<div class="tri" style="top:796.13px"></div>
<div class="a" style="left:205px;top:844px;width:1460px;height:1px;background:#c9cbd4"></div>
<div class="a nw" style="left:259.1px;top:819.38px;font-size:13.9px;letter-spacing:-0.11px;color:#1a1a1a;height:20px;line-height:20px;letter-spacing:1.04px;">6122</div>
<div class="a nw" style="left:434.5px;top:819.38px;font-size:13.9px;letter-spacing:-0.11px;color:#1a1a1a;height:20px;line-height:20px">Chi phí vật tư và dịch vụ đã sử dụng</div>
<div class="a nw" style="left:952.5px;top:819.38px;font-size:13.9px;letter-spacing:-0.11px;color:#1a1a1a;height:20px;line-height:20px;letter-spacing:1.04px;">612</div>
<div class="a nw" style="left:1117px;top:819.38px;font-size:13.9px;letter-spacing:-0.11px;color:#1a1a1a;height:20px;line-height:20px">Dư Nợ</div>
<div class="xs" style="top:820.68px;height:20px;line-height:20px">Xem/Sửa</div>
<div class="tri" style="top:826.68px"></div>
<div class="vd" style="left:422px;top:173px;height:660px"></div>
<div class="vd" style="left:941px;top:173px;height:660px"></div>
<div class="vd" style="left:1105px;top:173px;height:660px"></div>
<div class="vd" style="left:1268px;top:173px;height:660px"></div>
<div class="vd" style="left:1386px;top:173px;height:660px"></div>
<div class="vd" style="left:1551px;top:173px;height:660px"></div>
<div class="a" style="left:201px;top:291px;width:910px;height:128px;border:3px solid #ff3b3b"></div>
<div class="a" style="left:207px;top:659px;width:899px;height:99px;border:3px solid #ff3b3b"></div>
<div class="a" style="left:1665px;top:705px;width:8px;height:71px;background:#b5b7bd;border-radius:1px"></div>
<div class="a" style="left:1676px;top:338px;width:1px;height:46px;background:#1e73e6;box-shadow:-3px 0 10px 1px rgba(0,0,0,0.10)"></div>
<div class="a" style="left:1675px;top:338px;width:1px;height:46px;background:rgba(30,115,230,0.55)"></div>
<div class="a" style="left:1560.4px;top:712px;width:60.4px;height:60px;border-radius:50%;background:#2b7de9;box-shadow:0 1px 9px rgba(0,0,0,0.38)"></div>
<svg class="a" style="left:1555px;top:705px" width="70" height="70" viewBox="0 0 70 70"><ellipse cx="32.6" cy="32.8" rx="13.6" ry="11.4" fill="#fff"/><path d="M22.8 41L19.9 47.6L27.6 44.2Z" fill="#fff"/><ellipse cx="41.7" cy="42.6" rx="12.3" ry="11" fill="#2b7de9"/><ellipse cx="41.7" cy="42.6" rx="10" ry="8.7" fill="#fff"/><path d="M45.5 49.5L51.7 52.6L48.6 46.5Z" fill="#fff"/></svg>
<div class="a" style="left:1605.2px;top:714.1px;width:11.4px;height:11.4px;border-radius:50%;background:#fff;box-shadow:0 0 2px rgba(0,0,0,0.35)"><svg class="a" style="left:0;top:0" width="11.4" height="11.4" viewBox="0 0 11.4 11.4"><path d="M3.2 3.2L8.2 8.2M8.2 3.2L3.2 8.2" stroke="#1f70d8" stroke-width="1.3"/></svg></div>
<div class="a" style="left:0;top:0;width:1678px;height:1px;background:#000"></div>
<div class="a" style="left:0;top:825px;width:1678px;height:1px;background:#000"></div>
<div class="a" style="left:0;top:0;width:1px;height:826px;background:#000"></div>
<div class="a" style="left:1677px;top:0;width:1px;height:826px;background:#000"></div>
</body></html>
